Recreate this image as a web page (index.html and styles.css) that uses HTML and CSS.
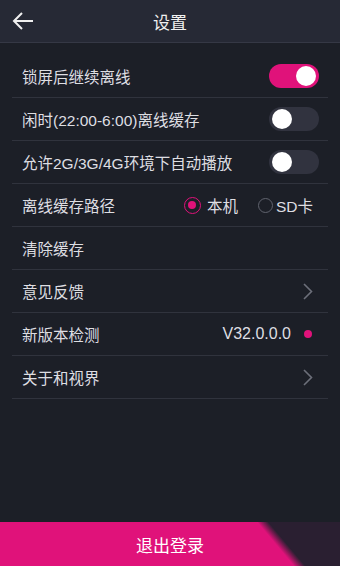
FILE: index.html
```html
<!DOCTYPE html>
<html lang="zh-CN">
<head>
    <meta charset="UTF-8">
    <meta name="viewport" content="width=device-width, initial-scale=1.0">
    <title>设置</title>
    <link rel="stylesheet" href="styles.css">
</head>
<body>
    <div class="page">
        <div class="header">
            <svg class="back" width="22" height="18" viewBox="0 0 22 18">
                <path d="M21 9H2M10 1L2 9l8 8" fill="none" stroke="#f0f0f0" stroke-width="2"/>
            </svg>
            <span class="title">设置</span>
        </div>

        <div class="list">
            <div class="row">
                <span>锁屏后继续离线</span>
                <div class="switch on"><div class="knob"></div></div>
            </div>
            <div class="row">
                <span>闲时(22:00-6:00)离线缓存</span>
                <div class="switch"><div class="knob"></div></div>
            </div>
            <div class="row">
                <span>允许2G/3G/4G环境下自动播放</span>
                <div class="switch"><div class="knob"></div></div>
            </div>
            <div class="row">
                <span>离线缓存路径</span>
                <div class="radios">
                    <span class="radio checked"><i></i>本机</span>
                    <span class="radio"><i></i>SD卡</span>
                </div>
            </div>
            <div class="row">
                <span>清除缓存</span>
            </div>
            <div class="row">
                <span>意见反馈</span>
                <svg class="arrow" width="10" height="17" viewBox="0 0 10 17">
                    <path d="M1 1l7.5 7.5L1 16" fill="none" stroke="#6c6f7a" stroke-width="1.6"/>
                </svg>
            </div>
            <div class="row">
                <span>新版本检测</span>
                <div class="version">V32.0.0.0 <span class="dot"></span></div>
            </div>
            <div class="row">
                <span>关于和视界</span>
                <svg class="arrow" width="10" height="17" viewBox="0 0 10 17">
                    <path d="M1 1l7.5 7.5L1 16" fill="none" stroke="#6c6f7a" stroke-width="1.6"/>
                </svg>
            </div>
        </div>

        <div class="logout">退出登录</div>
    </div>
</body>
</html>
```

FILE: styles.css
```css
html, body { margin: 0; padding: 0; }
body { background: #1c1f27; font-family: "Liberation Sans", "Noto Sans CJK SC", sans-serif; color: #dedee2; }
.page { width: 340px; height: 566px; display: flex; flex-direction: column; }
.header { height: 42px; background: #262935; border-bottom: 1px solid #353845; display: flex; align-items: center; justify-content: center; position: relative; }
.back { position: absolute; left: 12px; top: 12px; }
.title { font-size: 17px; color: #f0f0f0; }
.list { flex: 1; padding: 12px 12px 0; }
.row { height: 42px; border-bottom: 1px solid #30333d; display: flex; align-items: center; justify-content: space-between; padding: 0 9px 0 10px; font-size: 15.5px; }
.switch { width: 50px; height: 24px; border-radius: 12px; background: #31333f; display: flex; align-items: center; padding: 0 3px; box-sizing: border-box; }
.switch .knob { width: 20px; height: 20px; border-radius: 50%; background: #fff; }
.switch.on { background: #e0127a; justify-content: flex-end; }
.radios { display: flex; gap: 20px; margin-right: 6px; }
.radio { display: flex; align-items: center; gap: 3px; }
.radio i { width: 15px; height: 15px; border-radius: 50%; border: 1.5px solid #60636e; box-sizing: border-box; display: inline-block; }
.radio.checked { gap: 6px; }
.radio.checked i { border: 1.5px solid #e0127a; position: relative; width: 17px; height: 17px; }
.radio.checked i::after { content: ""; position: absolute; left: 3px; top: 3px; width: 8px; height: 8px; border-radius: 50%; background: #e0127a; }
.version { display: flex; align-items: center; gap: 13px; margin-right: 7px; font-size: 16px; }
.dot { width: 8px; height: 8px; border-radius: 50%; background: #e0127a; }
.arrow { margin-right: 6px; }
.logout { height: 44px; background: linear-gradient(50deg, #e0127a 78%, #2a1f31 81%); color: #fff; font-size: 17px; display: flex; align-items: center; justify-content: center; }
```
